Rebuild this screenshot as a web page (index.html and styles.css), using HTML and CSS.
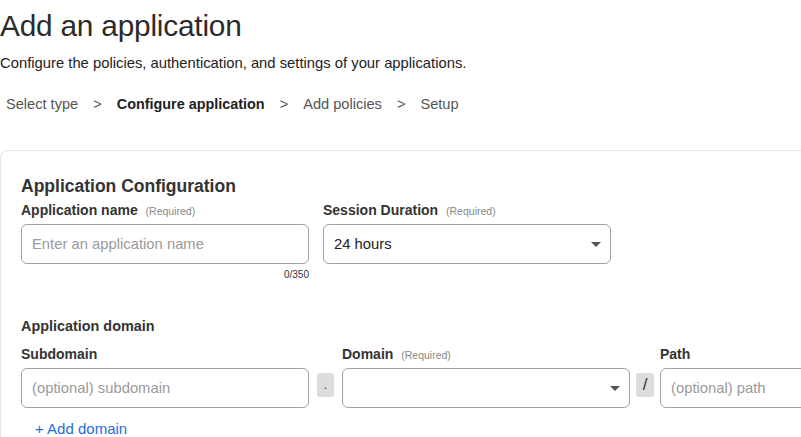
FILE: index.html
```html
<!DOCTYPE html>
<html>
<head>
<meta charset="utf-8">
<link rel="stylesheet" href="styles.css">
</head>
<body>
<header class="page-head">
  <h1 class="title">Add an application</h1>
  <p class="subtitle">Configure the policies, authentication, and settings of your applications.</p>
  <nav class="steps">
    <span class="step">Select type</span>
    <span class="sep">&gt;</span>
    <span class="step current">Configure application</span>
    <span class="sep">&gt;</span>
    <span class="step">Add policies</span>
    <span class="sep">&gt;</span>
    <span class="step">Setup</span>
  </nav>
</header>
<section class="card">
  <h2 class="card-title">Application Configuration</h2>
  <div class="row">
    <div class="field">
      <label class="label">Application name <span class="req">(Required)</span></label>
      <div class="input placeholder">Enter an application name</div>
      <div class="counter">0/350</div>
    </div>
    <div class="field">
      <label class="label">Session Duration <span class="req">(Required)</span></label>
      <div class="input select">24 hours<span class="caret"></span></div>
    </div>
  </div>
  <h3 class="sub-title">Application domain</h3>
  <div class="domain-row">
    <div class="field">
      <label class="label">Subdomain</label>
      <div class="input placeholder">(optional) subdomain</div>
    </div>
    <div class="joiner">.</div>
    <div class="field">
      <label class="label">Domain <span class="req">(Required)</span></label>
      <div class="input select"><span class="caret"></span></div>
    </div>
    <div class="joiner slash">/</div>
    <div class="field path">
      <label class="label">Path</label>
      <div class="input placeholder">(optional) path</div>
    </div>
  </div>
  <a class="add-link" href="#">+ Add domain</a>
</section>
</body>
</html>
```
FILE: styles.css
```css
* { box-sizing: border-box; }
html, body { margin: 0; padding: 0; background: #fff; overflow: hidden; }
body {
  font-family: "Liberation Sans", Arial, sans-serif;
  color: #333;
  width: 801px;
  height: 437px;
}
.page-head { padding: 0; }
.title {
  margin: 0;
  padding-top: 8px;
  font-size: 29.8px;
  line-height: 36px;
  font-weight: 500;
  color: #2b2b2b;
  letter-spacing: -0.2px;
}
.subtitle {
  margin: 10px 0 0 0;
  font-size: 14.8px;
  line-height: 18px;
  color: #222;
}
.steps {
  margin-top: 23px;
  padding-left: 6px;
  display: flex;
  align-items: center;
  font-size: 14.6px;
  line-height: 18px;
  color: #555;
}
.sep { margin: 0 15px; color: #555; }
.step.current { font-weight: bold; color: #222; font-size: 14.4px; }
.card {
  margin-top: 37px;
  border: 1px solid #e6e6e6;
  border-right: none;
  border-radius: 8px 0 0 0;
  padding: 24px 0 40px 20px;
  width: 820px;
}
.card-title {
  margin: 0;
  font-size: 17.5px;
  line-height: 22px;
  font-weight: bold;
  color: #333;
}
.row { display: flex; gap: 14px; margin-top: 3px; }
.field { width: 288px; display: flex; flex-direction: column; }
.label {
  font-size: 14px;
  line-height: 18px;
  font-weight: bold;
  color: #333;
  height: 22px;
  padding-top: 1px;
  margin-bottom: 2px;
}
.req { font-size: 10.5px; font-weight: normal; color: #888; margin-left: 4px; }
.input {
  height: 40px;
  border: 1px solid #a3a3a3;
  border-radius: 6px;
  padding: 0 10px;
  display: flex;
  align-items: center;
  font-size: 14.8px;
  color: #222;
  position: relative;
}
.input.placeholder { color: #9a9a9a; }
.caret {
  position: absolute;
  right: 9px;
  top: 17px;
  width: 0;
  height: 0;
  border-left: 5px solid transparent;
  border-right: 5px solid transparent;
  border-top: 5px solid #555;
}
.counter {
  text-align: right;
  font-size: 10px;
  line-height: 12px;
  color: #333;
  margin-top: 5px;
}
.sub-title {
  margin: 36px 0 0 0;
  font-size: 14.4px;
  line-height: 18px;
  font-weight: bold;
  color: #333;
}
.domain-row { display: flex; align-items: flex-start; margin-top: 9px; }
.joiner {
  width: 17px;
  height: 24px;
  margin: 29px 8px 0 8px;
  background: #dcdcdc;
  border-radius: 3px;
  display: flex;
  align-items: center;
  justify-content: center;
  font-size: 12px;
  color: #333;
}
.joiner.slash { width: 18px; margin: 29px 6px 0 6px; font-size: 17px; }
.field.path { width: 160px; }
.add-link {
  display: inline-block;
  margin-top: 12px;
  margin-left: 14px;
  font-size: 15px;
  line-height: 18px;
  color: #1f6fe0;
  text-decoration: none;
}
```
